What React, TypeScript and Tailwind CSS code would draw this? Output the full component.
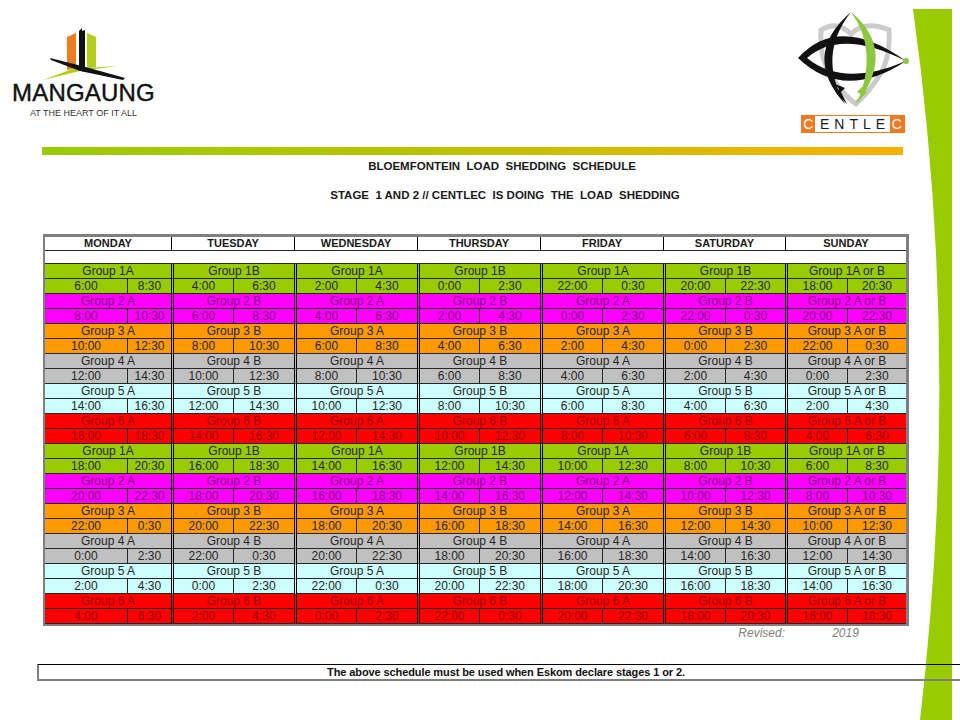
import React from "react";

const COLS =
  "grid grid-cols-[82px_44px_62px_61px_62px_61px_62px_61px_62px_61px_62px_60px_62px_59px]";

const days = [
  { name: "MONDAY", suffix: "A", base: 6 },
  { name: "TUESDAY", suffix: "B", base: 4 },
  { name: "WEDNESDAY", suffix: "A", base: 2 },
  { name: "THURSDAY", suffix: "B", base: 0 },
  { name: "FRIDAY", suffix: "A", base: 22 },
  { name: "SATURDAY", suffix: "B", base: 20 },
  { name: "SUNDAY", suffix: "A or B", base: 18 },
];

const groupStyles: Record<number, string> = {
  1: "bg-[#99cc00] text-[#262626]",
  2: "bg-[#ff00ff] text-[#800080]",
  3: "bg-[#ff9900] text-[#262626]",
  4: "bg-[#c0c0c0] text-[#262626]",
  5: "bg-[#ccffff] text-[#262626]",
  6: "bg-[#ff0000] text-[#990000]",
};

const cell = "h-[15px] border-b border-[#262626] text-center text-[12px] leading-[14px] whitespace-nowrap overflow-hidden";
const dayEdge = "border-l-[3px] border-double border-l-black";

function label(group: number, suffix: string) {
  return group === 1 ? `Group 1${suffix}` : `Group ${group} ${suffix}`;
}

function MangaungLogo() {
  return (
    <div className="flex flex-col pl-[12px] pt-[26px]">
      <svg width="140" height="56" viewBox="12 26 140 56">
        <polygon points="43,80 72,69 117,66 96,69 80,71" fill="#b6cc1c" />
        <polygon points="67,37 76,33 76,68 67,70" fill="#ee7d22" />
        <polygon points="87,33 96,37 96,67 87,69" fill="#b6cc1c" />
        <polygon points="79,31 82,28 82,31 85,30 85,72 79,70" fill="#111" />
        <polygon points="50,58 82,66 125,78 123,80 80,71 51,60" fill="#111" />
      </svg>
      <div className="text-[24px] leading-[24px] text-[#111] mt-[-1px] tracking-[0.2px] [-webkit-text-stroke:0.4px_#111]">MANGAUNG</div>
      <div className="text-[9px] leading-[10px] text-[#333] mt-[3px] ml-[18px]">AT THE HEART OF IT ALL</div>
    </div>
  );
}

function CentlecLogo() {
  return (
    <div className="flex flex-col items-center w-[111px] pt-[8px] mr-[52px]">
      <svg width="118" height="100" viewBox="795 8 118 100">
        <path
          d="M822 30 Q838 20 852 34 Q866 20 890 30 Q892 62 876 82 Q866 96 857 104 Q846 96 836 82 Q820 62 822 30 Z"
          fill="none"
          stroke="#cbcbcb"
          strokeWidth="5"
        />
        <path d="M799 58 Q840 13 907 61 Q842 28 808 58 Z" fill="#111" />
        <path d="M799 58 Q845 102 907 61 Q845 88 808 58 Z" fill="#111" />
        <path d="M852 12 Q802 55 846 104 Q818 55 852 12 Z" fill="#111" />
        <polygon points="836,84 846,88 842,92 848,104 837,93 840,89" fill="#111" />
        <path d="M852 12 Q898 50 858 104 Q880 50 852 12 Z" fill="#8dc63f" />
        <polygon points="866,84 858,92 862,94 856,104 868,92 864,90" fill="#8dc63f" />
        <circle cx="907" cy="61" r="3" fill="#8dc63f" />
      </svg>
      <div className="flex h-[18px] w-[104px] border border-[#f07a22] mt-[7px] text-[14px] leading-[16px]">
        <div className="w-[14px] bg-[#f07a22] text-white text-center">C</div>
        <div className="flex-1 bg-white text-[#1a1a1a] text-center tracking-[5px] pl-[5px]">ENTLE</div>
        <div className="w-[14px] bg-[#f07a22] text-white text-center">C</div>
      </div>
    </div>
  );
}

function Schedule() {
  const rows = Array.from({ length: 12 }, (_, i) => i);
  return (
    <div className="ml-[43px] w-[866px] border-l-2 border-r-[3px] border-t-[3px] border-b-2 border-[#7f7f7f] bg-white">
      <div className={COLS}>
        {days.map((d, i) => (
          <div
            key={d.name}
            className={`col-span-2 h-[14px] border-b border-[#262626] text-center text-[11px] font-bold leading-[13px] text-[#1a1a1a] ${i > 0 ? "border-l border-l-black" : ""}`}
          >
            {d.name}
          </div>
        ))}
        <div className="col-span-14 h-[13px] border-b border-[#262626]" />
      </div>
      {rows.map((i) => {
        const group = (i % 6) + 1;
        const style = groupStyles[group];
        return (
          <div key={i}>
            <div className={COLS}>
              {days.map((d, di) => (
                <div key={d.name} className={`col-span-2 ${cell} ${style} ${di > 0 ? dayEdge : ""}`}>
                  {label(group, d.suffix)}
                </div>
              ))}
            </div>
            <div className={COLS}>
              {days.map((d, di) => {
                const start = (d.base + 2 * i) % 24;
                const end = (start + 2) % 24;
                return (
                  <React.Fragment key={d.name}>
                    <div className={`${cell} ${style} ${di > 0 ? dayEdge : ""}`}>{`${start}:00`}</div>
                    <div className={`${cell} ${style} border-l border-l-[#262626]`}>{`${end}:30`}</div>
                  </React.Fragment>
                );
              })}
            </div>
          </div>
        );
      })}
    </div>
  );
}

export default function App() {
  return (
    <div className="relative w-[960px] h-[720px] overflow-hidden bg-white font-['Liberation_Sans',Arial,sans-serif]">
      <svg className="absolute left-[905px] top-0" width="55" height="720" viewBox="905 0 55 720">
        <path d="M913 9 L952 9 L952 720 L920 720 Q962 360 913 9 Z" fill="#99cc00" />
      </svg>
      <div className="relative flex flex-col">
        <header className="flex h-[147px] items-start justify-between">
          <MangaungLogo />
          <CentlecLogo />
        </header>
        <div className="ml-[42px] h-[8px] w-[861px] bg-gradient-to-r from-[#99cc00] via-[#b9c400] via-45% to-[#f7b000]" />
        <div className="mt-[4px] pl-[44px] h-[14px] text-center text-[11.5px] font-bold leading-[14px] text-[#1a1a1a] whitespace-pre">
          {"BLOEMFONTEIN  LOAD  SHEDDING  SCHEDULE"}
        </div>
        <div className="mt-[15px] pl-[50px] h-[14px] text-center text-[11.5px] font-bold leading-[14px] text-[#1a1a1a] whitespace-pre">
          {"STAGE  1 AND 2 // CENTLEC  IS DOING  THE  LOAD  SHEDDING"}
        </div>
        <div className="mt-[32px]">
          <Schedule />
        </div>
        <div className={`${COLS} ml-[45px] h-[14px] text-[12px] leading-[14px] italic text-[#808080]`}>
          <div className="col-start-11 col-span-2 text-right">Revised:</div>
          <div className="col-span-2 text-center">2019</div>
        </div>
        <div className="mt-[24px] ml-[37px] h-[17px] w-[936px] border-t border-t-black border-b-2 border-b-[#808080] border-l-2 border-l-[#808080] text-center text-[11px] font-bold leading-[14px] tracking-[-0.1px] text-[#111]">
          The above schedule must be used when Eskom declare stages 1 or 2.
        </div>
      </div>
    </div>
  );
}
